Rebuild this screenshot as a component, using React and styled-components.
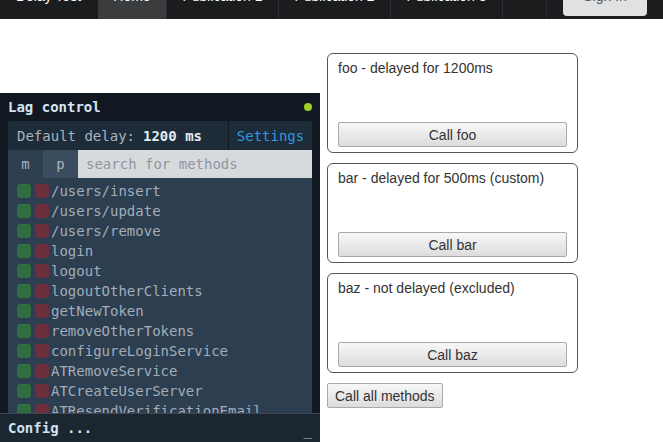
import React from "react";
import styled, { createGlobalStyle } from "styled-components";

const GlobalStyle = createGlobalStyle`
    html, body {
        margin: 0;
        padding: 0;
        background: #ffffff;
        font-family: "Liberation Sans", Arial, sans-serif;
    }
`;

const NavBar = styled.nav`
    display: flex;
    height: 19px;
    background: #1b1c1e;
    overflow: hidden;
`;

const NavItem = styled.div`
    width: ${ p => p.width }px;
    height: 19px;
    flex-shrink: 0;
    box-sizing: border-box;
    border-right: 1px solid ${ p => p.bare ? "transparent" : "#2c2d30" };
    background: ${ p => p.active ? "#3b3c3e" : "transparent" };
    color: #ffffff;
    font-size: 14px;
    line-height: 16px;
    text-align: center;
    overflow: hidden;
`;

const NavText = styled.span`
    display: block;
    margin-top: -12px;
`;

const SignIn = styled.div`
    margin-left: 16px;
    width: 84px;
    height: 16px;
    background: #e0e1e2;
    border-radius: 0 0 4px 4px;
    color: #555;
    font-size: 14px;
    line-height: 16px;
    text-align: center;
    overflow: hidden;
`;

const Content = styled.main`
    display: flex;
    flex-direction: column;
    align-items: flex-start;
    gap: 10px;
    padding: 34px 0 0 327px;
`;

const Card = styled.section`
    box-sizing: border-box;
    width: 251px;
    height: 100px;
    border: 1px solid #555;
    border-radius: 6px;
    padding: 6px 10px 5px;
    display: flex;
    flex-direction: column;
    justify-content: space-between;
    color: #333;
    font-size: 14px;
`;

const Button = styled.button`
    box-sizing: border-box;
    height: 25px;
    width: ${ p => p.full ? "100%" : "auto" };
    padding: 0 7px;
    border: 1px solid #a9a9a9;
    border-radius: 2px;
    background: linear-gradient(#f7f7f7, #dcdcdc);
    color: #333;
    font-family: "Liberation Sans", Arial, sans-serif;
    font-size: 14px;
`;

const LagPanel = styled.aside`
    position: fixed;
    left: 0;
    bottom: 0;
    width: 320px;
    height: 349px;
    background: #111821;
    display: flex;
    flex-direction: column;
    font-family: "DejaVu Sans Mono", "Liberation Mono", monospace;
    font-size: 14px;
`;

const PanelHead = styled.div`
    height: 28px;
    flex-shrink: 0;
    display: flex;
    align-items: center;
    justify-content: space-between;
    padding: 0 8px;
    color: #d6e4f2;
    font-weight: bold;
`;

const StatusDot = styled.span`
    width: 8px;
    height: 8px;
    border-radius: 50%;
    background: #9ad224;
`;

const Inner = styled.div`
    flex: 1;
    margin: 0 8px;
    min-height: 0;
    background: #2c3e50;
    border-radius: 4px 4px 0 0;
    display: flex;
    flex-direction: column;
    overflow: hidden;
`;

const DelayRow = styled.div`
    height: 29px;
    flex-shrink: 0;
    display: flex;
    background: #1e2b38;
`;

const DelayLabel = styled.div`
    flex: 1;
    display: flex;
    align-items: center;
    padding-left: 9px;
    color: #a9b4bf;
    b { color: #e3ecf4; margin-left: 8px; }
`;

const SettingsLink = styled.div`
    width: 83px;
    border-left: 1px solid #101820;
    display: flex;
    align-items: center;
    justify-content: center;
    color: #2e9ae0;
`;

const SearchRow = styled.div`
    height: 28px;
    flex-shrink: 0;
    display: flex;
`;

const Toggle = styled.div`
    width: 35px;
    display: flex;
    align-items: center;
    justify-content: center;
    background: ${ p => p.light ? "#3a4d5f" : "#2c3e50" };
    color: #a9b4bf;
`;

const SearchInput = styled.input`
    flex: 1;
    min-width: 0;
    border: 0;
    outline: 0;
    padding: 0 8px;
    background: #d6dadd;
    font-family: "DejaVu Sans Mono", "Liberation Mono", monospace;
    font-size: 14px;
    color: #333;
    &::placeholder { color: #8e969d; }
`;

const MethodList = styled.ul`
    list-style: none;
    margin: 0;
    padding: 3px 0 0 9px;
`;

const MethodRow = styled.li`
    height: 20px;
    display: flex;
    align-items: center;
    gap: 4px;
    color: #a3adb8;
    white-space: nowrap;
`;

const Square = styled.span`
    width: 14px;
    height: 14px;
    flex-shrink: 0;
    border-radius: 3px;
    background: ${ p => p.red ? "#6d2f3d" : "#2f6e40" };
    margin-right: ${ p => p.red ? -2 : 0 }px;
`;

const ConfigBar = styled.div`
    height: 28px;
    flex-shrink: 0;
    border-top: 1px solid #3e4853;
    background: #1c2631;
    display: flex;
    align-items: center;
    justify-content: space-between;
    padding: 0 8px;
    color: #cfe1f2;
    font-weight: bold;
    span:last-child { font-weight: normal; color: #b8c4cf; transform: translateY(2px); }
`;

const methods = [
    "/users/insert",
    "/users/update",
    "/users/remove",
    "login",
    "logout",
    "logoutOtherClients",
    "getNewToken",
    "removeOtherTokens",
    "configureLoginService",
    "ATRemoveService",
    "ATCreateUserServer",
    "ATResendVerificationEmail",
];

const cards = [
    { title: "foo - delayed for 1200ms", name: "foo" },
    { title: "bar - delayed for 500ms (custom)", name: "bar" },
    { title: "baz - not delayed (excluded)", name: "baz" },
];

const App = () => {
    return (
        <>
            <GlobalStyle/>
            <NavBar>
                <NavItem width={ 98 } bare><NavText>Delay Test</NavText></NavItem>
                <NavItem width={ 69 } active><NavText>Home</NavText></NavItem>
                <NavItem width={ 112 }><NavText>Publication 1</NavText></NavItem>
                <NavItem width={ 112 }><NavText>Publication 2</NavText></NavItem>
                <NavItem width={ 112 }><NavText>Publication 3</NavText></NavItem>
                <NavItem width={ 44 }/>
                <SignIn><NavText>Sign In</NavText></SignIn>
            </NavBar>

            <Content>
                { cards.map(card => (
                    <Card key={ card.name }>
                        <div>{ card.title }</div>
                        <Button full>Call { card.name }</Button>
                    </Card>
                )) }
                <Button>Call all methods</Button>
            </Content>

            <LagPanel>
                <PanelHead>
                    <span>Lag control</span>
                    <StatusDot/>
                </PanelHead>
                <Inner>
                    <DelayRow>
                        <DelayLabel>Default delay:<b>1200 ms</b></DelayLabel>
                        <SettingsLink>Settings</SettingsLink>
                    </DelayRow>
                    <SearchRow>
                        <Toggle>m</Toggle>
                        <Toggle light>p</Toggle>
                        <SearchInput placeholder="search for methods"/>
                    </SearchRow>
                    <MethodList>
                        { methods.map(m => (
                            <MethodRow key={ m }>
                                <Square/>
                                <Square red/>
                                <span>{ m }</span>
                            </MethodRow>
                        )) }
                    </MethodList>
                </Inner>
                <ConfigBar>
                    <span>Config ...</span>
                    <span>_</span>
                </ConfigBar>
            </LagPanel>
        </>
    );
};

export default App;
